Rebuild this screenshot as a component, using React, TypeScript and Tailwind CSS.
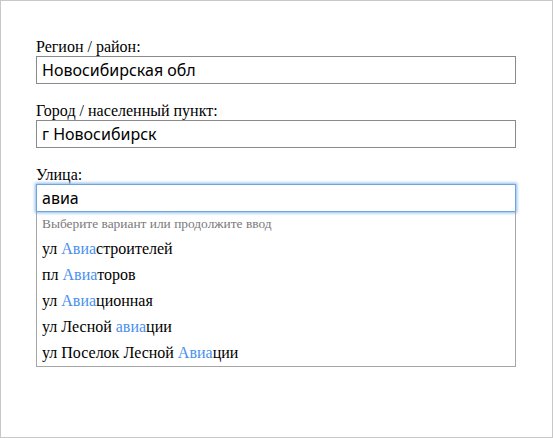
import React from 'react';

const serif = "font-['Liberation_Serif','Times_New_Roman',serif]";
const sans = "font-['Noto_Sans','Lucida_Grande',sans-serif]";

interface FieldProps {
  label: string;
  value: string;
  focused?: boolean;
}

function Field({ label, value, focused }: FieldProps) {
  return (
    <div className="flex flex-col">
      <label className={`${serif} text-[16px] leading-[18px] text-black`}>{label}</label>
      <div
        className={`h-[28px] w-[480px] border bg-white px-[5px] flex items-center ${sans} text-[16px] text-black ${
          focused
            ? 'border-[#6fa3dc] shadow-[0_0_3px_1px_#8bb8e8]'
            : 'border-[#8a8a8a]'
        }`}
      >
        {value}
      </div>
    </div>
  );
}

const suggestions: [string, string, string][] = [
  ['ул ', 'Авиа', 'строителей'],
  ['пл ', 'Авиа', 'торов'],
  ['ул ', 'Авиа', 'ционная'],
  ['ул Лесной ', 'авиа', 'ции'],
  ['ул Поселок Лесной ', 'Авиа', 'ции'],
];

export default function App() {
  return (
    <div className="w-[553px] h-[438px] border border-[#c8c8c8] bg-white pl-[35px] pt-[37px]">
      <div className="flex flex-col gap-[18px]">
        <Field label="Регион / район:" value="Новосибирская обл" />
        <Field label="Город / населенный пункт:" value="г Новосибирск" />
        <div className="flex flex-col">
          <Field label="Улица:" value="авиа" focused />
          <div className={`w-[480px] border border-t-0 border-[#a5a5a5] ${serif}`}>
            <div className="h-[24px] px-[5px] flex items-center text-[13.4px] text-[#7a7a7a]">
              Выберите вариант или продолжите ввод
            </div>
            {suggestions.map(([pre, hit, post]) => (
              <div key={pre + post} className="h-[26px] px-[5px] flex items-center text-[16px] text-black">
                <span className="whitespace-pre">{pre}</span>
                <span className="text-[#4a90f0]">{hit}</span>
                <span>{post}</span>
              </div>
            ))}
          </div>
        </div>
      </div>
    </div>
  );
}
